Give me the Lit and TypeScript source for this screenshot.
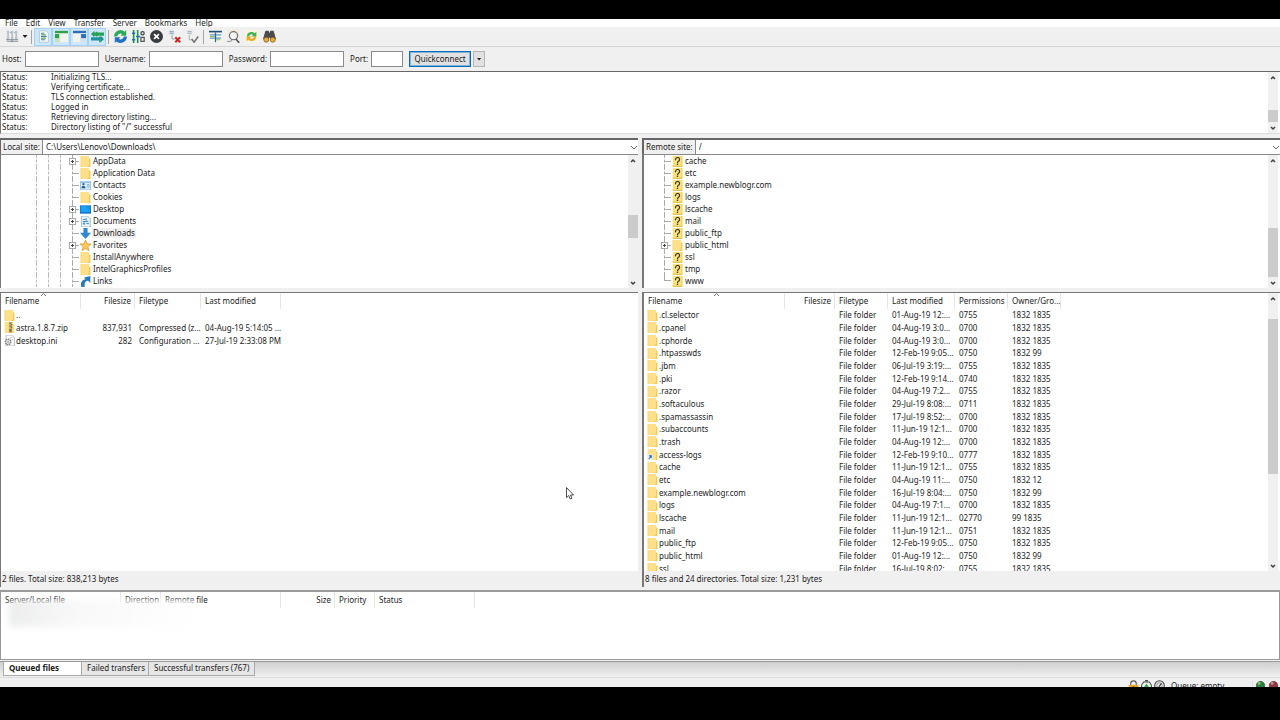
import { LitElement, html, svg, css, nothing } from "lit";
import { customElement, property } from "lit/decorators.js";
import { classMap } from "lit/directives/class-map.js";

const glyphs: Record<string, unknown> = {
  folder: svg`<path d="M1 0h12v3l2 1v12H1z" fill="#ffe08a"/><path d="M13 4h2v12h-4V14h2z" fill="#efca60"/><path d="M1 0h1v16H1z" fill="#f3d272"/>`,
  unknown: svg`<path d="M1 0h14v16H1z" fill="#f9e27a"/><path d="M1 14h14v2H1zM14 0h1v16h-1z" fill="#e3c552"/><path d="M5 6c0-5 6-5 6-1 0 3-3 2-3 5" fill="none" stroke="#333" stroke-width="1.700"/><path d="M7 11h2v2H7z" fill="#333"/>`,
  linked: svg`<path d="M1 0h12v3l2 1v12H1z" fill="#ffe08a"/><path d="M13 4h2v12h-2z" fill="#efca60"/><path d="M0 8h8v8H0z" fill="#e8f0fa"/><path d="M2 14l3-3H3V9h4v5l-1-2-3 3z" fill="#2458a8"/>`,
  zip: svg`<path d="M1 0h12v3l2 1v12H1z" fill="#ffdf80"/><path d="M7 0h5v16H7z" fill="#c9bb7d"/><path d="M8 1h2v2H8zM10 3h2v2h-2zM8 5h2v2H8zM10 7h2v2h-2zM8 10h3v4H8z" fill="#6c6a58"/>`,
  ini: svg`<path d="M3 0h8l4 4v12H3z" fill="#fff" stroke="#999"/><circle cx="6" cy="10" r="4" fill="#e2e2e2" stroke="#777" stroke-width="2" stroke-dasharray="2 1"/><circle cx="6" cy="10" r="1" fill="#777"/><path d="M8 4h4M11 7h2" stroke="#aaa"/>`,
  contacts: svg`<path d="M0 2h16v12H0z" fill="#7eb6dc"/><path d="M1 4h14v9H1z" fill="#d9effb"/><circle cx="5" cy="6" r="1.6" fill="#31597a"/><path d="M2 12c0-5 6-5 6 0z" fill="#31597a"/><path d="M10 7h4M10 10h4" stroke="#4884ae"/>`,
  desktop: svg`<path d="M0 2h16v12H0z" fill="#0b6cbd"/><path d="M1 3h14v9H1z" fill="#1aa3f5"/><path d="M8 3h7v9z" fill="#1b8fe6"/>`,
  documents: svg`<path d="M2 0h9l4 4v12H2z" fill="#e9f3fa" stroke="#8aa2b3"/><path d="M4 5h4M4 8h8M4 11h3M9 11h4M9 3v4M6 9v4" stroke="#3f8ac0" stroke-width="1.4"/>`,
  download: svg`<path d="M5 0h6v7h5l-8 9-8-9h5z" fill="#2f86d2"/>`,
  star: svg`<path d="M8 0l2.2 5.6 5.8.3-4.6 3.7L13 15.500 8 12.300 3 15.500l1.600-5.900L0 5.900l5.800-.3z" fill="#ffc95c" stroke="#d98f25"/>`,
  link: svg`<path d="M2 16C0 8 4 5 8 5L6 2l9-2v10l-3-3c-4 0-6 3-5 9z" fill="#2878bd"/>`,
  sites: svg`<path d="M1 1h3v4H1zM6 1h3v4H6zM11 1h3v4h-3zM1 8h3v4H1zM6 8h3v4H6zM11 8h3v4h-3z" fill="#b9c4ca"/><path d="M2.500 5v3M7.500 5v3M12.500 5v3M1 14h14M5 3h1M10 3h1" stroke="#7b8990" fill="none"/><path d="M0 12h15M7.500 12v3" stroke="#68767d"/>`,
  log: svg`<path d="M3 1h8l3 3v11H3z" fill="#f6fafc" stroke="#b3c3cd"/><path d="M5 4h4M5 8h7M5 12h5" stroke="#54809b" stroke-width="1.300"/><path d="M5 6h6M5 10h6" stroke="#5aa96b" stroke-width="1.300"/>`,
  local: svg`<path d="M0 1h16v14H0z" fill="#f3f3ee"/><path d="M0 1h16v3H0z" fill="#2fa149"/><path d="M0 4h6v11H0z" fill="#c3e2bd"/><path d="M0 5h5v5H0z" fill="#2fa149"/>`,
  remote: svg`<path d="M0 1h16v14H0z" fill="#f3f3ee"/><path d="M0 1h16v3H0z" fill="#2d6fb7"/><path d="M9 4h7v11H9z" fill="#d3e2f0"/><path d="M10 5h6v5h-6z" fill="#2d6fb7"/>`,
  queue: svg`<path d="M0 5l4-4v2h12v4H4v2z" fill="#27a154"/><path d="M16 11l-4-4v2H0v4h12v2z" fill="#1f8fa6"/><path d="M7 2v6M11 8v7" stroke="#27a154" stroke-width="2"/>`,
  refresh: svg`<path d="M0 8a8 8 0 0 1 13-6l2-2v7H8l2-2a4 4 0 0 0-6 3z" fill="#2bab58"/><path d="M16 8a8 8 0 0 1-13 6l-2 2V9h7l-2 2a4 4 0 0 0 6-3z" fill="#2272c3"/>`,
  process: svg`<path d="M2 0v16M7 0v16" stroke="#278c58" stroke-width="2"/><path d="M0 4h4M0 12h4M5 8h5" stroke="#2474aa" stroke-width="2"/><circle cx="13" cy="4" r="2" fill="none" stroke="#444" stroke-width="1.500"/><path d="M11 9h4v5h-4z" fill="none" stroke="#555" stroke-width="1.500"/>`,
  cancel: svg`<circle cx="8" cy="8" r="8" fill="#393c3e"/><path d="M5 5l6 6M11 5l-6 6" stroke="#fff" stroke-width="2"/>`,
  disconnect: svg`<path d="M1 0h7v6H1z" fill="#dce6ed"/><path d="M2 2h5M2 4h5M5 6v5h4" stroke="#7994a5" fill="none"/><path d="M9 9l6 6M15 9l-6 6" stroke="#c5282c" stroke-width="2.500"/>`,
  reconnect: svg`<path d="M1 0h7v6H1z" fill="#e3e8ec"/><path d="M2 2h5M2 4h5M4 6v6h4" stroke="#9aa5ac" fill="none"/><path d="M7 11l3 4 5-7" stroke="#777" stroke-width="2" fill="none"/>`,
  filter: svg`<path d="M0 1h16v14H0z" fill="#f5f5ee"/><path d="M0 2h16" stroke="#244c78" stroke-width="2"/><path d="M1 6h14M1 10h14" stroke="#5c9ccb" stroke-width="1.500"/><path d="M1 8h6M9 12h5" stroke="#9abd45" stroke-width="1.500"/><path d="M8 3v12" stroke="#35658e" stroke-width="1.500"/>`,
  compare: svg`<path d="M1 0h14v10H1z" fill="#f4ead9"/><circle cx="8" cy="7" r="5" fill="#f3f5f6" stroke="#6d6d6d" stroke-width="1.500"/><path d="M11 11l4 5" stroke="#555" stroke-width="2"/><path d="M0 14h5l1-3" stroke="#777" fill="none"/>`,
  sync: svg`<path d="M0 0h16v16H0z" fill="#f8f4df"/><path d="M2 8a6 6 0 0 1 10-4l2-2v6H8l2-2a3 3 0 0 0-5 2z" fill="#42b153"/><path d="M14 8a6 6 0 0 1-10 4l-2 2V8h6l-2 2a3 3 0 0 0 5-2z" fill="#eaa928"/>`,
  find: svg`<path d="M3 1h4l1 3 1-3h4l3 10-6 2-2-4-2 4-6-2z" fill="#4b4b4b"/><circle cx="4" cy="12" r="3" fill="#eab03e" stroke="#865d16"/><circle cx="12" cy="12" r="3" fill="#eab03e" stroke="#865d16"/>`,
  lock: svg`<path d="M4 8V5c0-5 8-5 8 0v3" fill="none" stroke="#555" stroke-width="1.600"/><path d="M1 7h14v9H1z" fill="#e6a92d"/><path d="M7 9h2v4H7z" fill="#614611"/>`,
  gauge: svg`<path d="M4 3h8l3 4v9H1V7z" fill="#eef5ee" stroke="#444" stroke-width="1.500"/><path d="M6 1h4" stroke="#444" stroke-width="2"/><path d="M8 5l4 6H9v4H7v-4H4z" fill="#3ba64b"/>`,
  speed: svg`<circle cx="8" cy="8" r="7" fill="#e7e7e7" stroke="#444" stroke-width="1.500"/><circle cx="8" cy="8" r="4" fill="none" stroke="#777"/><path d="M7 10l4-5" stroke="#333" stroke-width="1.500"/>`,
  green: svg`<circle cx="8" cy="8" r="6" fill="#2e7d3a" stroke="#1f4a26"/><circle cx="6" cy="5" r="2" fill="#8cc595"/>`,
  red: svg`<circle cx="8" cy="8" r="6" fill="#8f3a40" stroke="#4f2024"/><circle cx="6" cy="5" r="2" fill="#cf969a"/>`,
};

const icon = (name: string) =>
  html`<svg class="icon" viewBox="0 0 16 16" aria-hidden="true">${glyphs[name]}</svg>`;

const shared = css`
  * { box-sizing: border-box; }
  .icon { display: block; flex: none; width: 11px; height: 11px; }
  button, input, select { font: inherit; color: inherit; margin: 0; padding: 0; border-radius: 0; outline: none; white-space: nowrap; }
`;

@customElement("scroll-rail")
class ScrollRail extends LitElement {
  @property({ type: Number }) before = 0;
  @property({ type: Number }) thumb = 0;
  @property({ type: Number }) after = 0;
  static styles = css`
    :host { display: flex; flex-direction: column; flex: none; width: 10px; background: #f0f0f0; }
    .arrow { display: block; flex: none; width: 10px; height: 11px; }
    .thumb { background: #cbcbcb; }
  `;
  render() {
    const arrow = (d: string) => html`<svg class="arrow" viewBox="0 0 10 11" aria-hidden="true">
      <path d=${d} fill="none" stroke="#404040" stroke-width="1.500"/></svg>`;
    return html`${arrow("M3 7l2-2 2 2")}
      <div style="flex:${this.before}"></div>
      <div class="thumb" style="flex:${this.thumb}"></div>
      <div style="flex:${this.after}"></div>
      ${arrow("M3 5l2 2 2-2")}`;
  }
}

type Node = { name: string; icon: string; more?: boolean; selected?: boolean };

@customElement("folder-tree")
class FolderTree extends LitElement {
  @property({ attribute: false }) nodes: Node[] = [];
  @property({ type: Number }) depth = 0;
  @property({ type: Boolean }) closed = false;
  static styles = [shared, css`
    :host { display: block; flex: 1; min-width: 0; overflow: hidden; }
    ul { margin: 0; padding: 0; list-style: none; }
    li { display: flex; align-items: center; height: 12px; padding-left: 20px; }
    .deep { padding-left: 35px; }
    .guide { flex: none; width: 12px; height: 12px; border-left: 1px dashed #bbb; }
    .joint { position: relative; flex: none; width: 8px; height: 12px; border-left: 1px dashed #aaa; }
    .joint::after { content: ""; position: absolute; left: 0; right: 1px; top: 6px; border-top: 1px dashed #aaa; }
    .end { height: 6px; align-self: flex-start; }
    .end::after { top: 5px; }
    .toggle { position: absolute; z-index: 1; left: -4px; top: 3px; width: 7px; height: 7px; border: 1px solid #aaa; background:
      linear-gradient(#444, #444) center / 3px 1px no-repeat, linear-gradient(#444, #444) center / 1px 3px no-repeat, #fff; }
    .name { margin-left: 1px; padding: 0 1px; line-height: 10px; white-space: nowrap; }
    .selected { background: #f0f0f0; }
  `];
  render() {
    return html`<ul>${this.nodes.map((n, i) => html`<li class=${classMap({ deep: this.depth > 0 })}>
      ${Array.from({ length: this.depth }, () => html`<span class="guide"></span>`)}
      <span class=${classMap({ joint: true, end: this.closed && i === this.nodes.length - 1 })}>
        ${n.more ? html`<button class="toggle" aria-label="Expand ${n.name}"></button>` : nothing}
      </span>${icon(n.icon)}<span class=${classMap({ name: true, selected: !!n.selected })}>${n.name}</span></li>`)}</ul>`;
  }
}

@customElement("file-table")
class FileTable extends LitElement {
  @property() kind = "local";
  @property({ attribute: false }) heads: string[] = [];
  @property({ attribute: false }) rows: string[][] = [];
  static styles = [shared, css`
    :host { display: block; flex: 1; min-width: 0; overflow: hidden; }
    table, thead, tbody, tr { display: grid; }
    .local { --cols: 80px 54px 66px 80px; --rows: 38px; }
    .remote { --cols: 141px 50px 53px 67px 53px 53px; --rows: 266px; }
    .queue { --cols: 120px 40px 120px 54px 40px 100px; --rows: 0px; }
    tr { grid-template-columns: var(--cols); align-items: center; }
    thead { height: 16px; }
    tbody { height: var(--rows); grid-auto-rows: 1fr; }
    th, td { display: flex; align-items: center; min-width: 0; padding: 0 3px 0 4px; font-weight: 400; line-height: 10px; white-space: nowrap; }
    th { position: relative; height: 16px; border-right: 1px solid #e5e5e5; }
    td { height: 12px; }
    .right { justify-content: flex-end; }
    .cell-icon { gap: 1px; padding: 0 3px; }
    .sort { position: absolute; top: 0; left: 50%; width: 5px; height: 3px; }
  `];
  render() {
    const right = (h: string) => h === "Filesize" || h === "Size";
    return html`<table class=${this.kind}>
      <thead><tr>${this.heads.map((h) => html`<th class=${classMap({ right: right(h) })}>${h}${h === "Filename"
        ? html`<svg class="sort" viewBox="0 0 5 3" aria-hidden="true"><path d="M0 3l2.500-2.500L5 3" fill="none" stroke="#777"/></svg>` : nothing}</th>`)}</tr></thead>
      <tbody>${this.rows.map(([ic, ...cells]) => html`<tr>${cells.map((c, i) => i === 0
        ? html`<td class="cell-icon">${icon(ic)}<span>${c}</span></td>`
        : html`<td class=${classMap({ right: right(this.heads[i]) })}>${c}</td>`)}</tr>`)}</tbody>
    </table>`;
  }
}

const localTree: Node[] = [
  { name: "AppData", icon: "folder", more: true },
  { name: "Application Data", icon: "folder" },
  { name: "Contacts", icon: "contacts" },
  { name: "Cookies", icon: "folder" },
  { name: "Desktop", icon: "desktop", more: true },
  { name: "Documents", icon: "documents", more: true },
  { name: "Downloads", icon: "download", selected: true },
  { name: "Favorites", icon: "star", more: true },
  { name: "InstallAnywhere", icon: "folder" },
  { name: "IntelGraphicsProfiles", icon: "folder" },
  { name: "Links", icon: "link" },
];
const remoteTree: Node[] = ["cache", "etc", "example.newblogr.com", "logs", "lscache", "mail", "public_ftp", "public_html", "ssl", "tmp", "www"]
  .map((name) => (name === "public_html" ? { name, icon: "folder", more: true } : { name, icon: "unknown" }));

const localFiles = [
  ["folder", "..", "", "", ""],
  ["zip", "astra.1.8.7.zip", "837,931", "Compressed (z...", "04-Aug-19 5:14:05 ..."],
  ["ini", "desktop.ini", "282", "Configuration ...", "27-Jul-19 2:33:08 PM"],
];
const remoteFiles = [
  [".cl.selector", "01-Aug-19 12:...", "0755", "1832 1835"],
  [".cpanel", "04-Aug-19 3:0...", "0700", "1832 1835"],
  [".cphorde", "04-Aug-19 3:0...", "0700", "1832 1835"],
  [".htpasswds", "12-Feb-19 9:05...", "0750", "1832 99"],
  [".jbm", "06-Jul-19 3:19:...", "0755", "1832 1835"],
  [".pki", "12-Feb-19 9:14...", "0740", "1832 1835"],
  [".razor", "04-Aug-19 7:2...", "0755", "1832 1835"],
  [".softaculous", "29-Jul-19 8:08:...", "0711", "1832 1835"],
  [".spamassassin", "17-Jul-19 8:52:...", "0700", "1832 1835"],
  [".subaccounts", "11-Jun-19 12:1...", "0700", "1832 1835"],
  [".trash", "04-Aug-19 12:...", "0700", "1832 1835"],
  ["access-logs", "12-Feb-19 9:10...", "0777", "1832 1835"],
  ["cache", "11-Jun-19 12:1...", "0755", "1832 1835"],
  ["etc", "04-Aug-19 11:...", "0750", "1832 12"],
  ["example.newblogr.com", "16-Jul-19 8:04:...", "0750", "1832 99"],
  ["logs", "04-Aug-19 7:1...", "0700", "1832 1835"],
  ["lscache", "11-Jun-19 12:1...", "02770", "99 1835"],
  ["mail", "11-Jun-19 12:1...", "0751", "1832 1835"],
  ["public_ftp", "12-Feb-19 9:05...", "0750", "1832 1835"],
  ["public_html", "01-Aug-19 12:...", "0750", "1832 99"],
  ["ssl", "16-Jul-19 8:02:...", "0755", "1832 1835"],
].map(([n, m, p, o]) => [n === "access-logs" ? "linked" : "folder", n, "", "File folder", m, p, o]);

const messages = ["Initializing TLS...", "Verifying certificate...", "TLS connection established.", "Logged in", "Retrieving directory listing...", 'Directory listing of "/" successful'];

@customElement("app-root")
class AppRoot extends LitElement {
  static styles = [shared, css`
    :host { display: flex; flex-direction: column; box-sizing: border-box; height: 100vh; padding: 19px 0 33px; overflow: hidden; background: #000;
      color: #1c1c1c; font-family: "Noto Sans", "Open Sans", sans-serif; font-size: 8px; line-height: 10px; }
    .window { position: relative; display: flex; flex: 1; flex-direction: column; min-height: 0; background: #f0f0f0; }
    .menu { display: flex; flex: none; align-items: flex-end; gap: 8px; height: 8px; padding-left: 5px; overflow: hidden; background: #fff; }
    .menu button { border: 0; background: none; line-height: 8px; }
    .tools { display: flex; flex: none; align-items: center; height: 20px; padding-left: 3px; border-bottom: 1px solid #d5d5d5; }
    .tool { display: flex; flex: none; align-items: center; justify-content: center; width: 18px; height: 18px; border: 0; background: none; }
    .tool .icon { width: 13px; height: 13px; }
    .tool.on { border: 1px solid #a3d1f5; background: #cce6fb; }
    .rule { flex: none; width: 1px; height: 14px; margin: 0 2px; background: #a5a5a5; }
    .caret { width: 5px; height: 3px; background: #222; clip-path: polygon(0 0, 100% 0, 50% 100%); }
    .more { display: flex; align-items: center; justify-content: center; width: 8px; height: 18px; border: 0; background: none; }
    .connect { display: flex; flex: none; align-items: center; height: 24px; padding-left: 2px; }
    .connect label { margin-right: 3px; }
    .connect input { width: 74px; height: 16px; margin-right: 6px; border: 1px solid #8a8a8a; background: #fff; }
    .connect .port { width: 32px; }
    .go { width: 62px; height: 16px; margin-right: 2px; border: 1px solid #0b6bb5; box-shadow: inset 0 0 0 1px #7db4dd; background: #e1e1e1; }
    .drop { display: flex; align-items: center; justify-content: center; width: 12px; height: 16px; border: 1px solid #b5b5b5; background: #e1e1e1; }
    .log { display: flex; flex: none; height: 63px; margin-bottom: 4px; padding-right: 2px; border-top: 1px solid #666; border-left: 1px solid #777; border-bottom: 1px solid #ddd; background: #fff; }
    .lines { flex: 1; }
    .line { display: grid; grid-template-columns: 49px 1fr; padding-left: 1px; height: 10px; }
    .split { display: grid; flex: 1; grid-template-columns: 1fr 1fr; column-gap: 4px; min-height: 0; }
    .side { display: flex; flex-direction: column; min-width: 0; min-height: 0; }
    .site { display: flex; flex: none; height: 17px; border-top: 2px solid #666; border-left: 1px solid #666; border-bottom: 1px solid #888; background: #fff; }
    .site label { display: flex; align-items: center; padding: 0 2px; border-right: 1px solid #888; background: #f0f0f0; white-space: nowrap; }
    .combo { position: relative; flex: 1; }
    .combo select { display: block; width: 100%; height: 14px; padding-left: 3px; border: 0; background: #fff; appearance: none; }
    .chevron { position: absolute; right: 1px; top: 5px; width: 6px; height: 5px; pointer-events: none; }
    .tree { display: flex; flex: none; height: 133px; border-left: 1px solid #777; background: #fff; }
    .files { display: flex; flex: 1; min-height: 0; margin-top: 4px; border-top: 1px solid #777; border-left: 1px solid #777; background: #fff; }
    .remote-side .site, .remote-side .tree, .remote-side .files, .remote-side .total { border-left-width: 2px; }
    .remote-side .tree, .remote-side .files { padding-right: 2px; }
    .total { flex: none; height: 16px; padding-left: 1px; border-left: 1px solid #777; line-height: 16px; }
    .queue { position: relative; display: flex; flex: none; height: 70px; margin-top: 3px; border: 1px solid #999; border-top-width: 2px; background: #fff; }
    .hidden-names { position: absolute; left: 8px; top: 8px; width: 187px; height: 27px; background: linear-gradient(100deg, #e9ebeae6, #f8f8f8f2 35%, #fffffff2); filter: blur(3px); }
    .tabs { display: flex; flex: none; align-items: flex-start; height: 17px; margin-top: 1px; padding-left: 3px; border-top: 1px solid #999; border-bottom: 1px solid #ddd; background: linear-gradient(#cfcfcf, #f0f0f0); }
    .tab { height: 14px; padding: 0 5px 1px; border: 1px solid #aaa; border-top: 0; border-left-width: 0; background: #e6e6e6; text-align: left; }
    .current { width: 79px; border-left-width: 1px; background: #fff; font-weight: 700; }
    .second { width: 67px; }
    .third { width: 106px; }
    .status { display: flex; flex: none; justify-content: flex-end; gap: 2px; height: 9px; padding-right: 1px; overflow: hidden; }
    .status .icon { margin-top: 2px; }
    .waiting { width: 86px; margin-top: 3px; padding-left: 4px; border-right: 1px solid #ddd; }
    .cursor { position: absolute; left: 44.200%; top: 468px; width: 8px; height: 13px; }
  `];

  private tool(name: string, label: string, on = false) {
    return html`<button class=${classMap({ tool: true, on })} aria-label=${label}>${icon(name)}</button>`;
  }

  private site(id: string, label: string, path: string) {
    return html`<div class="site"><label for=${id}>${label}</label><div class="combo">
      <select id=${id}><option>${path}</option></select>
      <svg class="chevron" viewBox="0 0 6 5" aria-hidden="true"><path d="M0 1l3 3 3-3" fill="none" stroke="#666"/></svg>
    </div></div>`;
  }

  render() {
    return html`<div class="window">
      <nav class="menu">${["File", "Edit", "View", "Transfer", "Server", "Bookmarks", "Help"].map((m) => html`<button>${m}</button>`)}</nav>
      <div class="tools">
        ${this.tool("sites", "Site manager")}<button class="more" aria-label="Open site list"><span class="caret"></span></button>
        <span class="rule"></span>${this.tool("log", "Message log", true)}${this.tool("local", "Local tree", true)}${this.tool("remote", "Remote tree", true)}${this.tool("queue", "Transfer queue", true)}
        <span class="rule"></span>${this.tool("refresh", "Refresh")}${this.tool("process", "Process queue")}${this.tool("cancel", "Cancel")}${this.tool("disconnect", "Disconnect")}${this.tool("reconnect", "Reconnect")}
        <span class="rule"></span>${this.tool("filter", "Filters")}${this.tool("compare", "Compare")}${this.tool("sync", "Synchronized browsing")}${this.tool("find", "Search")}
      </div>
      <form class="connect" @submit=${(e: Event) => e.preventDefault()}>
        <label for="host">Host:</label><input id="host">
        <label for="user">Username:</label><input id="user">
        <label for="pass">Password:</label><input id="pass" type="password">
        <label for="port">Port:</label><input id="port" class="port">
        <button class="go">Quickconnect</button><button class="drop" type="button" aria-label="Recent servers"><span class="caret"></span></button>
      </form>
      <div class="log"><div class="lines">${messages.map((m) => html`<div class="line"><span>Status:</span><span>${m}</span></div>`)}</div>
        <scroll-rail .before=${28} .thumb=${12} .after=${0}></scroll-rail></div>
      <div class="split">
        <section class="side">
          ${this.site("local-path", "Local site:", "C:\\Users\\Lenovo\\Downloads\\")}
          <div class="tree"><folder-tree .nodes=${localTree} .depth=${3}></folder-tree><scroll-rail .before=${49} .thumb=${23} .after=${39}></scroll-rail></div>
          <div class="files"><file-table kind="local" .heads=${["Filename", "Filesize", "Filetype", "Last modified"]} .rows=${localFiles}></file-table></div>
          <div class="total">2 files. Total size: 838,213 bytes</div>
        </section>
        <section class="side remote-side">
          ${this.site("remote-path", "Remote site:", "/")}
          <div class="tree"><folder-tree .nodes=${remoteTree} closed></folder-tree><scroll-rail .before=${62} .thumb=${49} .after=${0}></scroll-rail></div>
          <div class="files"><file-table kind="remote" .heads=${["Filename", "Filesize", "Filetype", "Last modified", "Permissions", "Owner/Gro..."]} .rows=${remoteFiles}></file-table><scroll-rail .before=${15} .thumb=${154} .after=${86}></scroll-rail></div>
          <div class="total">8 files and 24 directories. Total size: 1,231 bytes</div>
        </section>
      </div>
      <div class="queue"><file-table kind="queue" .heads=${["Server/Local file", "Direction", "Remote file", "Size", "Priority", "Status"]}></file-table><div class="hidden-names"></div></div>
      <div class="tabs"><button class="tab current">Queued files</button><button class="tab second">Failed transfers</button><button class="tab third">Successful transfers (767)</button></div>
      <div class="status">${icon("lock")}${icon("gauge")}${icon("speed")}<span class="waiting">Queue: empty</span>${icon("green")}${icon("red")}</div>
      <svg class="cursor" viewBox="0 0 8 13" aria-hidden="true"><path d="M.5.5v10l2.300-2 1.500 3.500 1.700-.8-1.500-3.200H7.500z" fill="#fff" stroke="#222" stroke-width=".8"/></svg>
    </div>`;
  }
}
